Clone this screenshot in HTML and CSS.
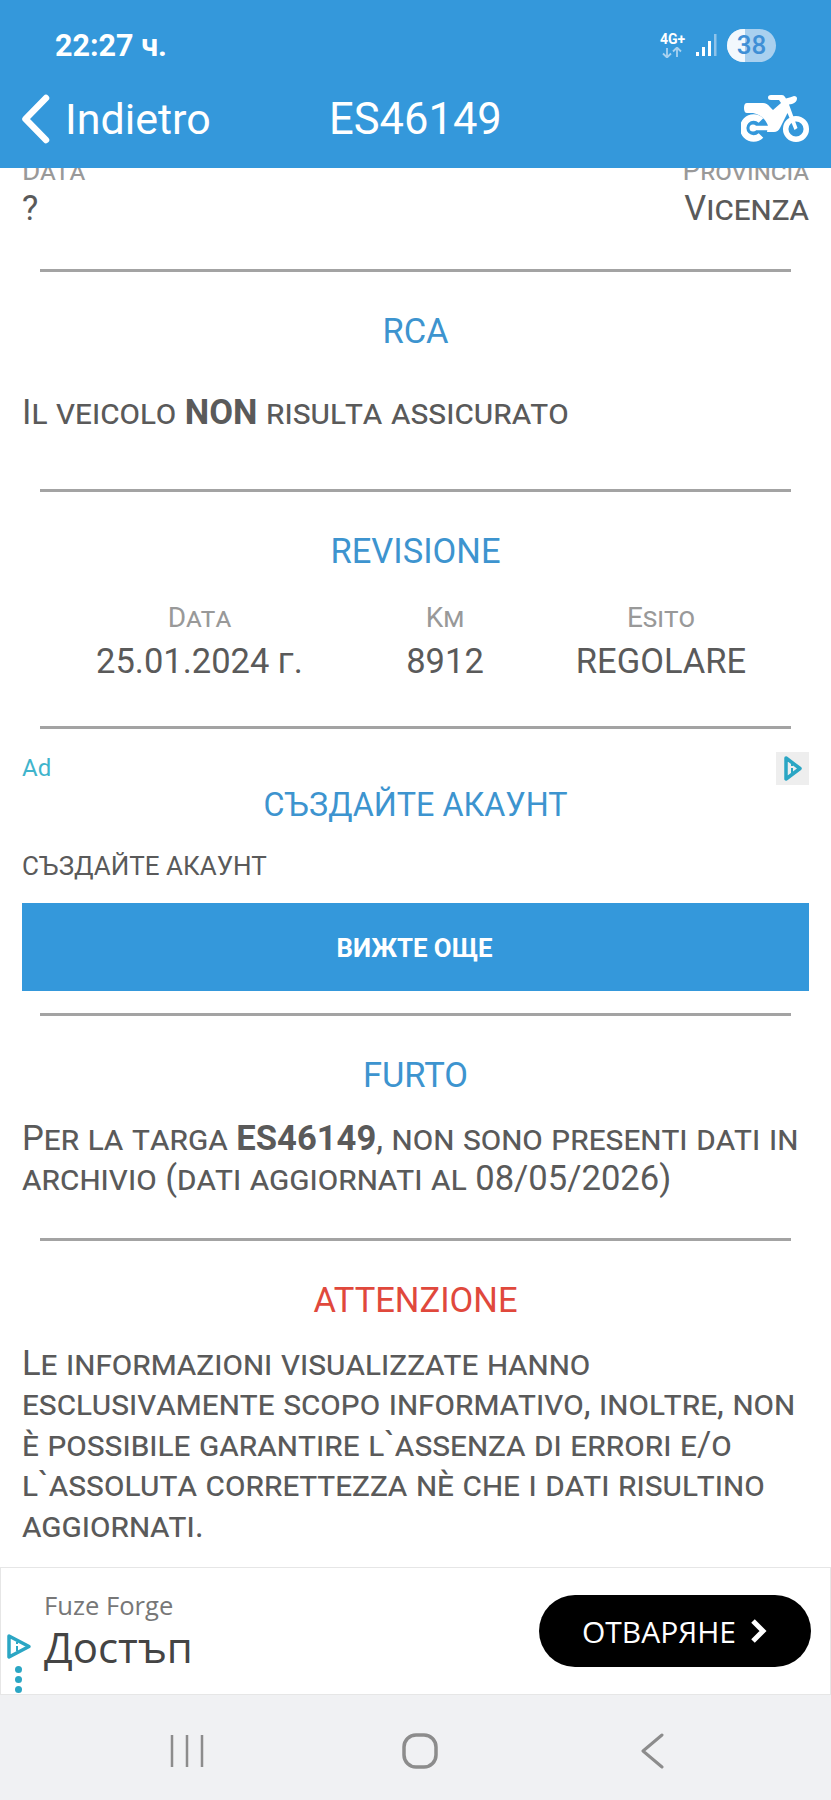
FILE: index.html
```html
<!DOCTYPE html>
<html lang="en">

<head>
    <meta charset="UTF-8">
    <meta name="viewport" content="width=device-width, initial-scale=1.0">
    <title>ES46149</title>
    <link rel="stylesheet" href="styles.css">
</head>

<body>

    <div class="screen">
        <div class="header">
            <div class="status-bar">
                <span class="time">22:27 ч.</span>
                <div class="status-icons">
                    <div class="network">
                        <span class="network-label">4G+</span>
                        <svg width="25" height="11" viewBox="0 0 25 11">
                            <path d="M7 1v9M3 6.500L7 10.500L11 6.500M17 10V1M13 4.500L17 .5L21 4.500" fill="none" stroke="#a9d2f0" stroke-width="1.800"/>
                        </svg>
                    </div>
                    <svg class="signal" width="21" height="23" viewBox="0 0 21 23">
                        <rect x="0" y="18" width="3" height="4" fill="#fff"/>
                        <rect x="6" y="13" width="3" height="9" fill="#fff"/>
                        <rect x="12" y="7" width="3" height="15" fill="#fff"/>
                        <rect x="18" y="0" width="2.500" height="22" fill="#8fc3ea"/>
                    </svg>
                    <div class="battery"><span class="battery-fill"></span><span class="battery-level">38</span></div>
                </div>
            </div>
            <div class="navbar">
                <div class="back">
                    <svg width="30" height="50" viewBox="0 0 30 50">
                        <path d="M25 4L4.500 25L25 46" fill="none" stroke="#fff" stroke-width="6.500" stroke-linecap="round" stroke-linejoin="round"/>
                    </svg>
                    <span>Indietro</span>
                </div>
                <h1>ES46149</h1>
                <svg class="moto" width="69" height="48" viewBox="0 0 69 48">
                    <path d="M20 25.500A10.500 10.500 0 1 0 20 40.500" fill="none" stroke="#fff" stroke-width="6.500"/>
                    <circle cx="12" cy="33" r="3.500" fill="#fff"/>
                    <path d="M12 33H28" stroke="#fff" stroke-width="4.500"/>
                    <circle cx="55" cy="34" r="10.300" fill="none" stroke="#fff" stroke-width="5.500"/>
                    <path d="M6 8H22Q26 8 29 12L32 15L40 8L38 5H30Q27 5 27 2.500Q27 0 30 0H41Q43 0 44 2L45 3.500Q50 2 53 1Q56 1 56 3.500Q56 7 51 9L48 9.500L56.500 33L53.500 35L46.500 18L39 33Q37 37 33 37H26L27 31Q24 21 12 18H6Q3 18 3 13Q3 8 6 8Z" fill="#fff"/>
                </svg>
            </div>
        </div>

        <div class="content">
            <div class="top-row">
                <div>
                    <div class="label">Data</div>
                    <div class="value">?</div>
                </div>
                <div class="align-right">
                    <div class="label">Provincia</div>
                    <div class="value">Vicenza</div>
                </div>
            </div>
            <hr>

            <h2>RCA</h2>
            <p class="rca-text">Il veicolo <b>NON</b> risulta assicurato</p>
            <hr>

            <h2>Revisione</h2>
            <div class="revision">
                <div>
                    <div class="label">Data</div>
                    <div class="value">25.01.2024 г.</div>
                </div>
                <div>
                    <div class="label">Km</div>
                    <div class="value">8912</div>
                </div>
                <div>
                    <div class="label">Esito</div>
                    <div class="value">REGOLARE</div>
                </div>
            </div>
            <hr>

            <div class="ad">
                <div class="ad-top">
                    <span class="ad-label">Ad</span>
                    <span class="ad-icon">
                        <svg width="21" height="27" viewBox="0 0 21 27">
                            <path d="M4 3L18 13.500L4 24Z" fill="none" stroke="#2ba6c4" stroke-width="3.500" stroke-linejoin="round"/>
                            <path d="M10 9v2M10 13v5" stroke="#2ba6c4" stroke-width="2"/>
                        </svg>
                    </span>
                </div>
                <div class="ad-title">СЪЗДАЙТЕ АКАУНТ</div>
                <div class="ad-text">СЪЗДАЙТЕ АКАУНТ</div>
                <div class="ad-button">ВИЖТЕ ОЩЕ</div>
            </div>
            <hr>

            <h2>Furto</h2>
            <p>Per la targa <b>ES46149</b>, non sono presenti dati in archivio (dati aggiornati al 08/05/2026)</p>
            <hr>

            <h2 class="warning">Attenzione</h2>
            <p>Le informazioni visualizzate hanno esclusivamente scopo informativo, inoltre, non è possibile garantire l`assenza di errori e/o l`assoluta correttezza nè che i dati risultino aggiornati.</p>
        </div>

        <div class="banner">
            <div class="banner-side">
                <svg width="26" height="27" viewBox="0 0 26 27">
                    <path d="M3 3L23 13.500L3 24Z" fill="none" stroke="#2ba6c4" stroke-width="3.500" stroke-linejoin="round"/>
                    <path d="M11 9v2M11 13v5" stroke="#2ba6c4" stroke-width="2"/>
                </svg>
                <div class="dots"><span></span><span></span><span></span></div>
            </div>
            <div class="banner-text">
                <div class="banner-brand">Fuze Forge</div>
                <div class="banner-title">Достъп</div>
            </div>
            <div class="open-btn">
                <span>ОТВАРЯНЕ</span>
                <svg width="18" height="26" viewBox="0 0 18 26">
                    <path d="M3 3L13 13L3 23" fill="none" stroke="#fff" stroke-width="5"/>
                </svg>
            </div>
        </div>

        <div class="system-nav">
            <svg width="34" height="34" viewBox="0 0 34 34">
                <path d="M2 1V33M17 1V33M32 1V33" stroke="#8c8c8c" stroke-width="2.500"/>
            </svg>
            <svg class="home-icon" width="36" height="36" viewBox="0 0 36 36">
                <rect x="2" y="2" width="32" height="32" rx="12" fill="none" stroke="#8c8c8c" stroke-width="3.500"/>
            </svg>
            <svg width="24" height="36" viewBox="0 0 24 36">
                <path d="M22 2L3 18L22 34" fill="none" stroke="#8c8c8c" stroke-width="3" stroke-linecap="round" stroke-linejoin="round"/>
            </svg>
        </div>
    </div>

</body>

</html>
```

FILE: styles.css
```css
* {
    box-sizing: border-box;
}

body {
    margin: 0;
    font-family: Roboto, Arial, sans-serif;
    background-color: #fff;
}

.screen {
    width: 831px;
    height: 1800px;
    display: flex;
    flex-direction: column;
    overflow: hidden;
}

/* blue top area */
.header {
    height: 168px;
    flex-shrink: 0;
    background-color: #3498db;
    color: #fff;
    position: relative;
    z-index: 1;
}

.status-bar {
    height: 90px;
    padding: 0 55px;
    display: flex;
    justify-content: space-between;
    align-items: center;
}

.time {
    font-size: 30.500px;
    font-weight: 700;
}

.status-icons {
    display: flex;
    align-items: center;
}

.network {
    width: 25px;
    margin-right: 11px;
    display: flex;
    flex-direction: column;
    align-items: center;
}

.network-label {
    font-size: 14px;
    font-weight: 700;
    line-height: 15px;
}

.signal {
    margin-right: 10px;
}

.battery {
    width: 49px;
    height: 33px;
    border-radius: 17px;
    overflow: hidden;
    background-color: #a9d0ef;
    display: flex;
    align-items: center;
    justify-content: center;
    position: relative;
}

.battery-fill {
    position: absolute;
    left: 0;
    top: 0;
    bottom: 0;
    width: 18px;
    background-color: #f2f8fd;
}

.battery-level {
    position: relative;
    font-size: 26px;
    font-weight: 500;
    color: #3f8fd6;
}

.navbar {
    height: 58px;
    padding: 0 21px;
    display: flex;
    align-items: center;
    justify-content: space-between;
    position: relative;
}

.back {
    display: flex;
    align-items: center;
    gap: 14px;
    font-size: 43px;
}

.navbar h1 {
    position: absolute;
    left: 329px;
    margin: 0;
    font-size: 43.500px;
    font-weight: 400;
}

/* scrolled page */
.content {
    flex: 1;
    min-height: 0;
    overflow: hidden;
    padding: 0 22px;
    color: #5a5a5a;
    font-variant: small-caps;
}

.top-row {
    margin-top: -14px;
    display: flex;
    justify-content: space-between;
}

.align-right {
    text-align: right;
}

.label {
    font-size: 28px;
    line-height: 34px;
    color: #999;
}

.value {
    font-size: 34.500px;
    line-height: 40px;
}

hr {
    margin: 0 18px;
    height: 3px;
    border: none;
    background-color: #a3a3a3;
}

.top-row + hr {
    margin-top: 41px;
}

h2 {
    margin: 37px 0 0;
    text-align: center;
    font-size: 34.500px;
    line-height: 44px;
    font-weight: 400;
    font-variant: normal;
    text-transform: uppercase;
    color: #3d94cf;
}

h2.warning {
    color: #e0483c;
}

p {
    margin: 21px 0 39px;
    font-size: 34.600px;
    line-height: 40.500px;
}

p b {
    font-weight: 700;
}

.rca-text {
    margin: 39px 0 56px;
}

.revision {
    margin: 26px 0 41px;
    display: grid;
    grid-template-columns: 355px 136px 1fr;
    text-align: center;
}

.revision .label {
    line-height: 38px;
}

.revision .value {
    line-height: 48px;
}

.ad-top {
    margin-top: 23px;
    height: 33px;
    display: flex;
    justify-content: space-between;
    align-items: center;
}

.ad-label {
    font-size: 24px;
    font-variant: normal;
    color: #40b4cc;
}

.ad-icon {
    width: 33px;
    height: 33px;
    background-color: #eee;
    display: flex;
    align-items: center;
    justify-content: center;
}

.ad-title {
    margin-top: -2px;
    text-align: center;
    font-size: 32.300px;
    line-height: 44px;
    font-variant: normal;
    color: #3d94cf;
}

.ad-text {
    margin-top: 22px;
    font-size: 26px;
    line-height: 34px;
    font-variant: normal;
}

.ad-button {
    margin-top: 20px;
    height: 88px;
    padding: 3px 2px 0 0;
    background-color: #3498db;
    color: #fff;
    font-size: 25.800px;
    font-weight: 700;
    font-variant: normal;
    display: flex;
    align-items: center;
    justify-content: center;
}

.ad + hr {
    margin-top: 22px;
}

/* bottom ad banner */
.banner {
    height: 128px;
    flex-shrink: 0;
    border: 1px solid #e6e6e6;
    background-color: #fff;
    display: flex;
    align-items: center;
    font-family: "Open Sans", sans-serif;
}

.banner-side {
    width: 43px;
    height: 126px;
    padding: 65px 0 0 5px;
    display: flex;
    flex-direction: column;
    align-items: flex-start;
}

.dots {
    margin: 6px 0 0 9px;
    display: flex;
    flex-direction: column;
    gap: 3px;
}

.dots span {
    width: 7px;
    height: 7px;
    border-radius: 50%;
    background-color: #2ba6c4;
}

.banner-text {
    flex: 1;
}

.banner-brand {
    font-size: 25.600px;
    line-height: 30px;
    color: #777;
}

.banner-title {
    margin-top: 1px;
    font-size: 42px;
    line-height: 50px;
    color: #444;
}

.open-btn {
    width: 272px;
    height: 72px;
    margin-right: 19px;
    border-radius: 36px;
    background-color: #000;
    color: #fff;
    font-size: 30px;
    display: flex;
    align-items: center;
    justify-content: center;
    gap: 14px;
}

.system-nav {
    height: 105px;
    flex-shrink: 0;
    background-color: #f0f1f3;
    padding: 7px 167px 0 170px;
    display: flex;
    align-items: center;
    justify-content: space-between;
}

.home-icon {
    margin-left: -5px;
}
```
